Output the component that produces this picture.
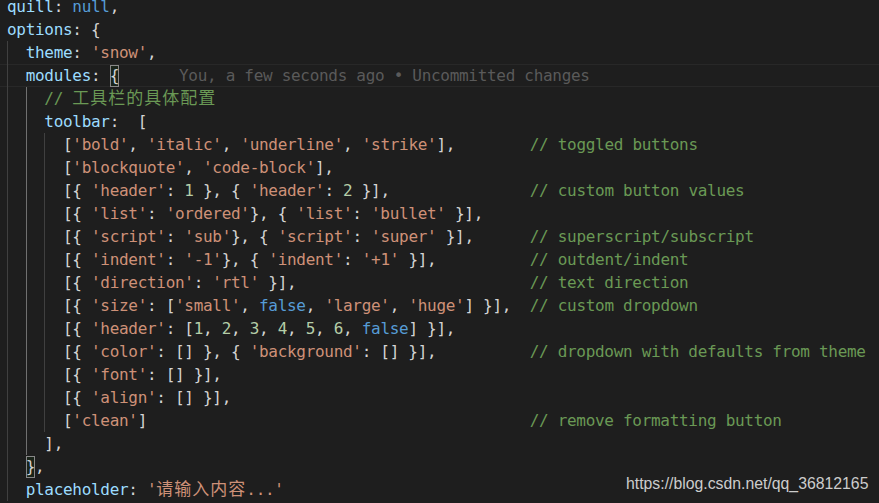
const LINES = [
  { indent: 0, code: "quill: null," },
  { indent: 0, code: "options: {" },
  { indent: 2, code: "theme: 'snow'," },
  {
    indent: 2,
    code: "modules: {",
    match: 9,
    current: true,
    blame: "You, a few seconds ago • Uncommitted changes",
  },
  { indent: 4, code: "// 工具栏的具体配置", cjk: "tracking-[1px]" },
  { indent: 4, code: "toolbar:  [" },
  { indent: 6, code: "['bold', 'italic', 'underline', 'strike'],", note: "toggled buttons" },
  { indent: 6, code: "['blockquote', 'code-block']," },
  { indent: 6, code: "[{ 'header': 1 }, { 'header': 2 }],", note: "custom button values" },
  { indent: 6, code: "[{ 'list': 'ordered'}, { 'list': 'bullet' }]," },
  { indent: 6, code: "[{ 'script': 'sub'}, { 'script': 'super' }],", note: "superscript/subscript" },
  { indent: 6, code: "[{ 'indent': '-1'}, { 'indent': '+1' }],", note: "outdent/indent" },
  { indent: 6, code: "[{ 'direction': 'rtl' }],", note: "text direction" },
  { indent: 6, code: "[{ 'size': ['small', false, 'large', 'huge'] }],", note: "custom dropdown" },
  { indent: 6, code: "[{ 'header': [1, 2, 3, 4, 5, 6, false] }]," },
  { indent: 6, code: "[{ 'color': [] }, { 'background': [] }],", note: "dropdown with defaults from theme" },
  { indent: 6, code: "[{ 'font': [] }]," },
  { indent: 6, code: "[{ 'align': [] }]," },
  { indent: 6, code: "['clean']", note: "remove formatting button" },
  { indent: 4, code: "]," },
  { indent: 2, code: "},", match: 0 },
  { indent: 2, code: "placeholder: '请输入内容...'", cjk: "tracking-[1px]" },
];

const COMMENT_COL = 56;

const TOKEN_RE =
  /(\/\/.*)|('[^']*')|(\b\d+\b)|(\b(?:null|false|true)\b)|([A-Za-z_$][\w$]*)/g;

// Dark+ colours
const COLORS = ["text-[#6a9955]", "text-[#ce9178]", "text-[#b5cea8]", "text-[#569cd6]", "text-[#9cdcfe]"];

function tokenize(src) {
  const out = [];
  let last = 0;
  let m;
  TOKEN_RE.lastIndex = 0;
  while ((m = TOKEN_RE.exec(src))) {
    if (m.index > last) out.push({ text: src.slice(last, m.index), cls: "text-[#d4d4d4]" });
    const group = m.slice(1).findIndex((g) => g !== undefined);
    out.push({ text: m[0], cls: COLORS[group] });
    last = m.index + m[0].length;
  }
  if (last < src.length) out.push({ text: src.slice(last), cls: "text-[#d4d4d4]" });
  return out;
}

function WithCjk({ text, track }) {
  const parts = text.split(/([\u3000-\u9fff\uff00-\uffef]+)/);
  return parts.map((p, i) =>
    i % 2 === 1 ? (
      <span key={i} className={`text-[17px] ${track}`}>
        {p}
      </span>
    ) : (
      p
    )
  );
}

function Guide({ active }) {
  return (
    <span
      className={
        active
          ? "inline-block h-[23px] align-top shadow-[inset_1px_0_0_#707070]"
          : "inline-block h-[23px] align-top shadow-[inset_1px_0_0_#404040]"
      }
    >
      {"  "}
    </span>
  );
}

function CodeLine({ line }) {
  const { indent, code, note, match, blame, current, cjk } = line;
  const text = note ? code.padEnd(COMMENT_COL - indent) + "// " + note : code;
  const levels = indent / 2;

  let body;
  if (match !== undefined) {
    const before = text.slice(0, match);
    const ch = text[match];
    const after = text.slice(match + 1);
    body = (
      <>
        {tokenize(before).map((t, i) => (
          <span key={"b" + i} className={t.cls}>
            {t.text}
          </span>
        ))}
        <span className="inline-block h-[22px] leading-[22px] text-[#d4d4d4] bg-[#0064001a] shadow-[inset_0_0_0_1px_#888888]">
          {ch}
        </span>
        {tokenize(after).map((t, i) => (
          <span key={"a" + i} className={t.cls}>
            {t.text}
          </span>
        ))}
      </>
    );
  } else {
    body = tokenize(text).map((t, i) => (
      <span key={i} className={t.cls}>
        <WithCjk text={t.text} track={cjk} />
      </span>
    ));
  }

  return (
    <div
      className={
        current
          ? "h-[23px] leading-[23px] whitespace-pre shadow-[inset_0_1px_0_#282828,inset_0_-1px_0_#282828]"
          : "h-[23px] leading-[23px] whitespace-pre"
      }
    >
      <div className="pl-[7px]">
        {Array.from({ length: levels }, (_, i) => (
          <Guide key={i} active={i === 1} />
        ))}
        {body}
        {blame && <span className="ml-[60px] text-[#5a5a5a]">{blame}</span>}
      </div>
    </div>
  );
}

export default function App() {
  return (
    <div className="relative w-[879px] h-[503px] overflow-hidden bg-[#1e1e1e] font-['DejaVu_Sans_Mono','Noto_Sans_CJK_SC',monospace] text-[16px] tracking-[-0.3px]">
      <div className="-mt-[5.5px]">
        {LINES.map((line, i) => (
          <CodeLine key={i} line={line} />
        ))}
      </div>
      <div className="absolute left-[626px] top-[474px] leading-[20px] text-[15.8px] tracking-normal text-[#cccccc] font-['Liberation_Sans',Arial,sans-serif] whitespace-nowrap">
        https://blog.csdn.net/qq_36812165
      </div>
    </div>
  );
}
